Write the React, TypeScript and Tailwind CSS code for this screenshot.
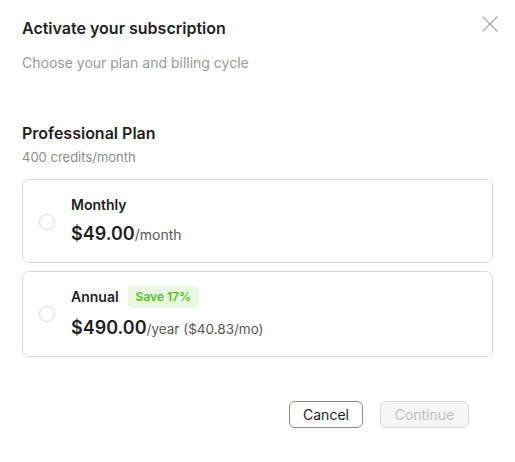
import { X } from 'lucide-react';

export default function App() {
  const font = { fontFamily: 'Inter, "Noto Sans", sans-serif' };
  return (
    <div className="w-[515px] h-[462px] bg-white relative text-[#1f1f1f]" style={font}>
      <button className="absolute left-[476px] top-[10px] text-[#a6a6a6]">
        <X size={28} strokeWidth={1} />
      </button>
      <div className="px-[22px] pt-[18px]">
        <h1 className="text-[16px] leading-[20px] font-semibold">Activate your subscription</h1>
        <p className="mt-[15px] text-[14px] leading-[20px] text-[#999]">Choose your plan and billing cycle</p>

        <h2 className="mt-[50px] text-[16px] leading-[20px] font-semibold">Professional Plan</h2>
        <p className="mt-[5px] text-[13px] leading-[18px] text-[#8c8c8c]">400 credits/month</p>

        <div className="mt-[13px] flex flex-col gap-[8px]">
          <label className="flex items-center gap-4 border border-[#d9d9d9] rounded-[7px] pl-4 pt-[15px] pb-[14px]">
            <span className="w-4 h-4 rounded-full border border-[#d9d9d9] bg-white" />
            <div>
              <div className="text-[14px] leading-[20px] font-semibold">Monthly</div>
              <div className="mt-[6px] leading-[26px]">
                <span className="text-[18px] font-semibold">$49.00</span>
                <span className="text-[14px] text-[#595959]">/month</span>
              </div>
            </div>
          </label>
          <label className="flex items-center gap-4 border border-[#d9d9d9] rounded-[7px] pl-4 pt-[14px] pb-[14px]">
            <span className="w-4 h-4 rounded-full border border-[#d9d9d9] bg-white" />
            <div>
              <div className="flex items-center gap-[9px]">
                <span className="text-[14px] leading-[20px] font-semibold">Annual</span>
                <span className="h-[22px] px-2 flex items-center rounded-[4px] bg-[#e8f8e2] text-[#52c41a] text-[12px] font-semibold">Save 17%</span>
              </div>
              <div className="mt-[7px] leading-[26px]">
                <span className="text-[18px] font-semibold">$490.00</span>
                <span className="text-[13.5px] text-[#595959]">/year ($40.83/mo)</span>
              </div>
            </div>
          </label>
        </div>

        <div className="mt-[44px] flex justify-end gap-[17px] pr-[24px]">
          <button className="w-[74px] h-[27px] rounded-[6px] border border-[#8c8c8c] text-[14px] text-[#1f1f1f]">Cancel</button>
          <button className="w-[89px] h-[27px] rounded-[6px] border border-[#d9d9d9] bg-[#f5f5f5] text-[14px] text-[#bfbfbf]">Continue</button>
        </div>
      </div>
    </div>
  );
}
